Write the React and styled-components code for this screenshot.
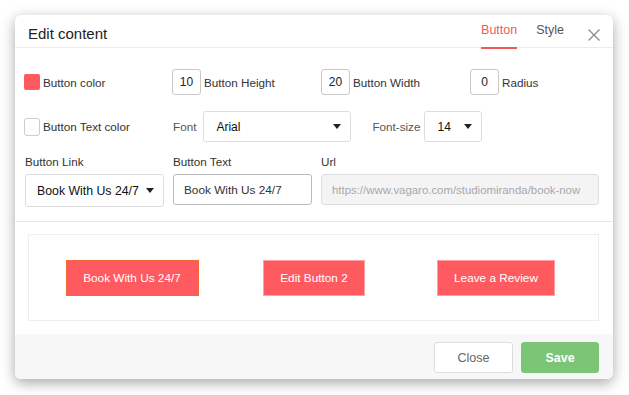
import React from "react";
import styled, { createGlobalStyle } from "styled-components";

const Global = createGlobalStyle`
  html, body {
    margin: 0;
    background: #fff;
  }
  body {
    font-family: "Liberation Sans", Arial, sans-serif;
    color: #333;
  }
  * {
    box-sizing: border-box;
  }
`;

const Page = styled.div`
  padding: 15px 16px 16px 15px;
`;

const Dialog = styled.div`
  width: 598px;
  background: #fff;
  border-radius: 6px;
  box-shadow: 0 4px 14px rgba(0, 0, 0, 0.35);
  overflow: hidden;
`;

const Header = styled.div`
  display: flex;
  align-items: flex-start;
  height: 33px;
  padding: 0 13px;
  border-bottom: 1px solid #ececec;
`;

const Title = styled.div`
  flex: 1;
  margin-top: 10px;
  font-size: 15px;
  line-height: 18px;
  color: #222;
`;

const Tabs = styled.div`
  display: flex;
  gap: 19px;
`;

const Tab = styled.div`
  height: 34px;
  padding-top: 8px;
  font-size: 12.5px;
  line-height: 14px;
  color: ${(p) => (p.active ? "#f0585c" : "#555")};
  border-bottom: 2px solid ${(p) => (p.active ? "#f0585c" : "transparent")};
`;

const CloseX = styled.svg`
  margin: 14px 0 0 24px;
  width: 12px;
  height: 12px;
`;

const Body = styled.div`
  padding: 21px 9px 14px 9px;
`;

const TopRow = styled.div`
  display: grid;
  grid-template-columns: 148px 149px 149px 1fr;
  align-items: center;
`;

const Field = styled.div`
  display: flex;
  align-items: center;
  gap: 3px;
`;

const Label = styled.span`
  font-size: 11.7px;
  color: ${(p) => p.color || "#333"};
  margin-right: ${(p) => p.mr || 0}px;
  margin-left: ${(p) => p.ml || 0}px;
`;

const Swatch = styled.div`
  width: 16px;
  height: 16px;
  border-radius: 2px;
  background: #ff5a5f;
`;

const Check = styled.div`
  width: 16px;
  height: 18px;
  border: 1px solid #ccc;
  border-radius: 3px;
  background: #fff;
`;

const NumBox = styled.div`
  width: 29px;
  height: 26px;
  border: 1px solid #c8c8c8;
  border-radius: 3px;
  display: flex;
  align-items: center;
  justify-content: center;
  font-size: 12px;
  color: #222;
`;

const MidRow = styled.div`
  display: flex;
  align-items: center;
  margin-top: 16px;
`;

const Cell = styled.div`
  width: ${(p) => p.w}px;
  display: flex;
  align-items: center;
  gap: 3px;
`;

const Select = styled.div`
  width: ${(p) => p.w}px;
  height: ${(p) => p.h || 31}px;
  border: 1px solid #ddd;
  border-radius: 3px;
  padding: 0 9px 0 ${(p) => p.pl || 11}px;
  display: flex;
  align-items: center;
  justify-content: space-between;
  font-size: ${(p) => p.fs || 12}px;
  color: #111;
`;

const Caret = styled.span`
  width: 0;
  height: 0;
  border-left: 4px solid transparent;
  border-right: 4px solid transparent;
  border-top: 5px solid #222;
`;

const LinkRow = styled.div`
  display: grid;
  grid-template-columns: 139px 139px 278px;
  gap: 9px;
  margin-top: 13px;
  padding-left: 1px;
  align-items: start;
`;

const FieldLabel = styled.div`
  font-size: 11.7px;
  line-height: 14px;
  margin-bottom: 5px;
  color: #333;
`;

const TextBox = styled.div`
  height: 31px;
  border: 1px solid ${(p) => (p.disabled ? "#ddd" : "#bbb")};
  background: ${(p) => (p.disabled ? "#f4f4f4" : "#fff")};
  color: ${(p) => (p.disabled ? "#a8a8a8" : "#333")};
  border-radius: 3px;
  padding: 0 10px;
  display: flex;
  align-items: center;
  font-size: ${(p) => (p.disabled ? 11.4 : 11.8)}px;
  white-space: nowrap;
  overflow: hidden;
`;

const PreviewSection = styled.div`
  border-top: 1px solid #e8e8e8;
  padding: 12px 14px 13px 13px;
`;

const PreviewBox = styled.div`
  height: 87px;
  border: 1px solid #eee;
  display: grid;
  grid-template-columns: repeat(3, 182px);
  padding-left: 12px;
  align-items: center;
  justify-items: center;
`;

const PreviewButton = styled.div`
  width: ${(p) => p.w}px;
  height: 36px;
  background: #ff5a5f;
  border: 1px solid ${(p) => (p.selected ? "#f26a35" : "#ffa0a3")};
  color: #fff;
  font-size: 11.8px;
  display: flex;
  align-items: center;
  justify-content: center;
  white-space: nowrap;
`;

const Footer = styled.div`
  height: 45px;
  background: #f7f7f7;
  display: flex;
  justify-content: flex-end;
  align-items: flex-start;
  gap: 8px;
  padding: 8px 14px 0 0;
`;

const FooterButton = styled.button`
  width: ${(p) => p.w}px;
  height: 31px;
  border-radius: 3px;
  font-family: "Liberation Sans", Arial, sans-serif;
  font-size: 12.5px;
  font-weight: ${(p) => (p.primary ? "bold" : "normal")};
  color: ${(p) => (p.primary ? "#fff" : "#666")};
  background: ${(p) => (p.primary ? "#7cc577" : "#fff")};
  border: 1px solid ${(p) => (p.primary ? "#7cc577" : "#ddd")};
  padding: 0;
`;

export default function App() {
  return (
    <Page>
      <Global />
      <Dialog>
        <Header>
          <Title>Edit content</Title>
          <Tabs>
            <Tab active>Button</Tab>
            <Tab>Style</Tab>
          </Tabs>
          <CloseX viewBox="0 0 12 12">
            <path d="M0.5 0.5 L11.5 11.5 M11.5 0.5 L0.5 11.5" stroke="#8a8a8a" strokeWidth="1.3" fill="none" />
          </CloseX>
        </Header>

        <Body>
          <TopRow>
            <Field>
              <Swatch />
              <Label>Button color</Label>
            </Field>
            <Field>
              <NumBox>10</NumBox>
              <Label>Button Height</Label>
            </Field>
            <Field>
              <NumBox>20</NumBox>
              <Label>Button Width</Label>
            </Field>
            <Field>
              <NumBox>0</NumBox>
              <Label>Radius</Label>
            </Field>
          </TopRow>

          <MidRow>
            <Cell w={149}>
              <Check />
              <Label>Button Text color</Label>
            </Cell>
            <Label color="#555" mr={7}>Font</Label>
            <Select w={148} pl={12}>
              Arial
              <Caret />
            </Select>
            <Label color="#555" ml={21} mr={4}>Font-size</Label>
            <Select w={58} pl={12}>
              14
              <Caret />
            </Select>
          </MidRow>

          <LinkRow>
            <div>
              <FieldLabel>Button Link</FieldLabel>
              <Select h={33} fs={12.3} pl={11}>
                Book With Us 24/7
                <Caret />
              </Select>
            </div>
            <div>
              <FieldLabel>Button Text</FieldLabel>
              <TextBox>Book With Us 24/7</TextBox>
            </div>
            <div>
              <FieldLabel>Url</FieldLabel>
              <TextBox disabled>https://www.vagaro.com/studiomiranda/book-now</TextBox>
            </div>
          </LinkRow>
        </Body>

        <PreviewSection>
          <PreviewBox>
            <PreviewButton w={133} selected>Book With Us 24/7</PreviewButton>
            <PreviewButton w={102}>Edit Button 2</PreviewButton>
            <PreviewButton w={118}>Leave a Review</PreviewButton>
          </PreviewBox>
        </PreviewSection>

        <Footer>
          <FooterButton w={79}>Close</FooterButton>
          <FooterButton w={78} primary>Save</FooterButton>
        </Footer>
      </Dialog>
    </Page>
  );
}
